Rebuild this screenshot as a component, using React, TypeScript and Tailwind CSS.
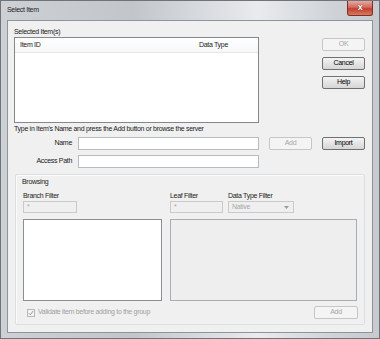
import type { ReactNode } from "react";

const FONT = "font-['Liberation_Sans',Arial,sans-serif] text-[7px] tracking-[-0.3px]";

interface ButtonProps {
  label: string;
  disabled?: boolean;
  className?: string;
}

/** Win7 push button, drawn greyed when disabled. */
const Button = ({ label, disabled = false, className = "" }: ButtonProps) => (
  <div
    className={`flex h-[13px] w-[43px] items-center justify-center rounded-[2px] border ${
      disabled
        ? "border-[#c4c6c8] bg-[#f4f4f4] text-[#a6a6a6]"
        : "border-[#707070] bg-[linear-gradient(#f4f4f4,#e4e4e4_50%,#d6d6d6)] text-black"
    } ${className}`}
  >
    {label}
  </div>
);

const Input = ({ className = "", children }: { className?: string; children?: ReactNode }) => (
  <div className={`h-[13px] border border-[#b7bbc1] bg-white ${className}`}>{children}</div>
);

const DisabledInput = ({ className = "" }: { className?: string }) => (
  <div
    className={`flex h-[12px] items-center border border-[#c8cacc] bg-[#efefef] pl-[3px] text-[#a8a8a8] ${className}`}
  >
    *
  </div>
);

export default function App() {
  return (
    <div className={`h-[339px] w-[380px] overflow-hidden bg-white ${FONT}`}>
      <div className="flex h-full w-full flex-col border border-[#6f7479] bg-[linear-gradient(90deg,#cdd1d5_0%,#c2c6cb_35%,#e9ebee_68%,#cfd3d7_88%,#c6cace_100%)]">
        {/* title bar */}
        <div className="flex h-[19px] shrink-0 items-start justify-between">
          <span className="pl-[6px] pt-[4px] text-[#1e1e1e]">Select Item</span>
          <div className="mr-[6px] flex h-[15px] w-[26px] items-center justify-center rounded-b-[3px] border border-t-0 border-[#7d2f28] bg-[linear-gradient(#e8a99f,#d2685c_45%,#c2402f_55%,#d77a60)] text-[9px] font-bold text-white [text-shadow:0_0_1px_#400]">
            x
          </div>
        </div>

        {/* client area */}
        <div className="mx-[6px] flex h-[313px] shrink-0 flex-col border border-[#8e949a] bg-[#f0f0f0] pl-[6px] pt-[6px] text-[#1b1b1b]">
          <div className="flex">
            <div className="flex w-[245px] flex-col">
              <span className="h-[10px] leading-[10px]">Selected Item(s)</span>
              <div className="flex h-[86px] flex-col border border-[#828790] bg-white">
                <div className="flex h-[14px] items-center justify-between bg-[linear-gradient(#ffffff,#f6f7f9)] pl-[5px] pr-[30px] shadow-[0_1px_0_#e5e6e8]">
                  <span>Item ID</span>
                  <span>Data Type</span>
                </div>
              </div>
            </div>
            <div className="ml-[63px] mt-[11px] flex flex-col gap-[6px]">
              <Button label="OK" disabled />
              <Button label="Cancel" />
              <Button label="Help" />
            </div>
          </div>

          <span className="mt-[1px] h-[10px] leading-[10px]">
            Type in Item's Name and press the Add button or browse the server
          </span>

          <div className="mt-[3px] flex items-center">
            <span className="w-[58px] text-right">Name</span>
            <Input className="ml-[6px] w-[181px]" />
            <Button label="Add" disabled className="ml-[10px]" />
            <Button label="Import" className="ml-[10px]" />
          </div>

          <div className="mt-[5px] flex items-center">
            <span className="w-[58px] text-right">Access Path</span>
            <Input className="ml-[6px] w-[181px]" />
          </div>

          {/* browsing group */}
          <div className="ml-[1px] mt-[6px] flex h-[151px] w-[350px] flex-col rounded-[2px] border border-[#dcdfe2] pl-[6px] pt-[2px] shadow-[inset_1px_1px_0_#fbfbfb]">
            <span className="h-[9px] leading-[9px]">Browsing</span>
            <div className="mt-[5px] flex pl-[1px]">
              <div className="flex w-[139px] flex-col">
                <span className="h-[9px] leading-[9px]">Branch Filter</span>
                <DisabledInput className="mt-[1px] w-[54px]" />
                <div className="mt-[6px] h-[82px] border border-[#8a8f96] bg-white" />
              </div>
              <div className="ml-[8px] flex w-[187px] flex-col">
                <div className="flex">
                  <div className="flex w-[53px] flex-col">
                    <span className="h-[9px] leading-[9px]">Leaf Filter</span>
                    <DisabledInput className="mt-[1px] w-[53px]" />
                  </div>
                  <div className="ml-[5px] flex w-[66px] flex-col">
                    <span className="h-[9px] leading-[9px]">Data Type Filter</span>
                    <div className="mt-[1px] flex h-[12px] items-center justify-between border border-[#c8cacc] bg-[#efefef] pl-[3px] pr-[4px] text-[#a8a8a8]">
                      <span>Native</span>
                      <svg width="5" height="3" viewBox="0 0 5 3">
                        <path d="M0 0h5L2.5 3z" fill="#9a9a9a" />
                      </svg>
                    </div>
                  </div>
                </div>
                <div className="mt-[6px] h-[82px] border border-[#a9acb0] bg-[#eeeeee]" />
              </div>
            </div>
            <div className="mt-[5px] flex items-center">
              <div className="ml-[5px] flex h-[8px] w-[8px] items-center justify-center border border-[#b5b8bb] bg-[#f3f3f3]">
                <svg width="6" height="6" viewBox="0 0 6 6">
                  <path d="M0.8 3.2l1.5 1.6L5.2 1" fill="none" stroke="#9c9c9c" strokeWidth="1" />
                </svg>
              </div>
              <span className="ml-[3px] text-[#a0a0a0]">Validate item before adding to the group</span>
              <Button label="Add" disabled className="ml-auto mr-[6px] h-[12px] w-[44px]" />
            </div>
          </div>
        </div>
      </div>
    </div>
  );
}
